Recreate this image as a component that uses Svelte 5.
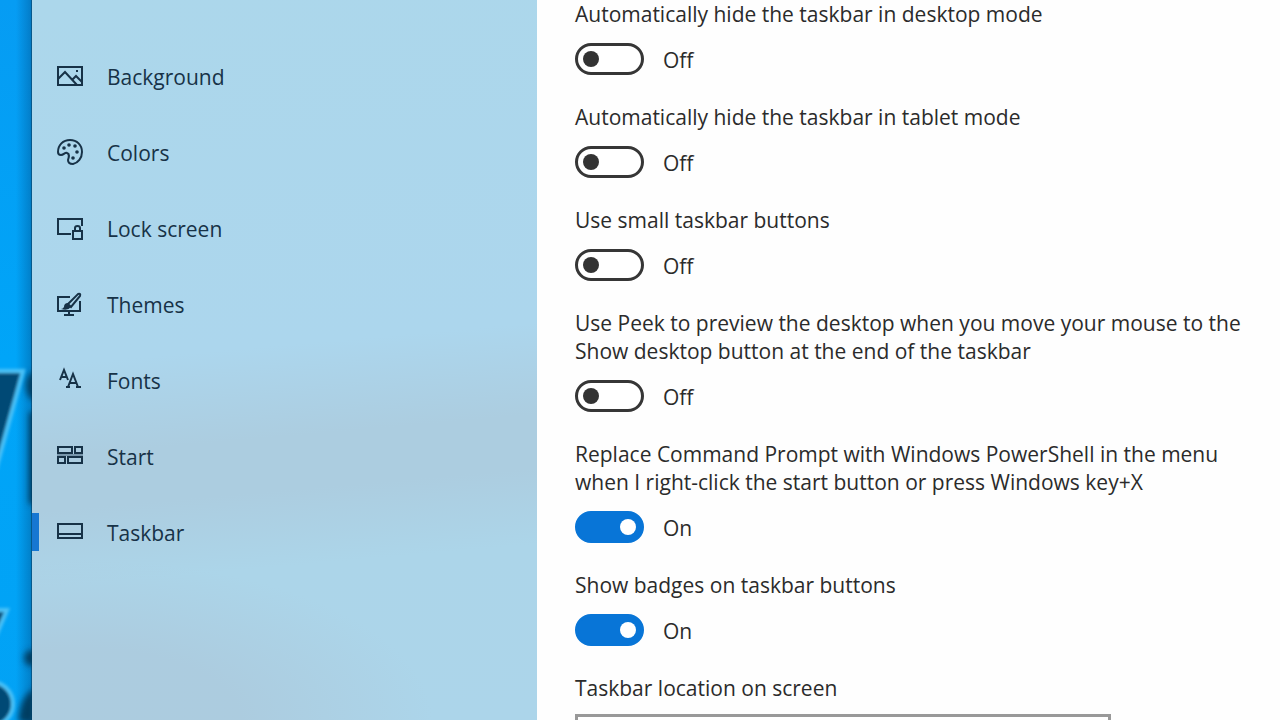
<script>
  let navItems = [
    { id: 'background', label: 'Background' },
    { id: 'colors', label: 'Colors' },
    { id: 'lock', label: 'Lock screen' },
    { id: 'themes', label: 'Themes' },
    { id: 'fonts', label: 'Fonts' },
    { id: 'start', label: 'Start' },
    { id: 'taskbar', label: 'Taskbar' }
  ];

  let current = 'taskbar';

  let settings = [
    { id: 'hide-desktop', label: 'Automatically hide the taskbar in desktop mode', on: false },
    { id: 'hide-tablet', label: 'Automatically hide the taskbar in tablet mode', on: false },
    { id: 'small-buttons', label: 'Use small taskbar buttons', on: false },
    {
      id: 'peek',
      label: 'Use Peek to preview the desktop when you move your mouse to the Show desktop button at the end of the taskbar',
      on: false
    },
    {
      id: 'powershell',
      label: 'Replace Command Prompt with Windows PowerShell in the menu when I right-click the start button or press Windows key+X',
      on: true
    },
    { id: 'badges', label: 'Show badges on taskbar buttons', on: true }
  ];

  let location = '';
</script>

<div class="screen">
  <div class="wallpaper" aria-hidden="true">
    <svg viewBox="0 0 32 720" preserveAspectRatio="xMinYMin slice">
      <defs>
        <filter id="soft" x="-100%" y="-50%" width="300%" height="200%">
          <feGaussianBlur stdDeviation="3" />
        </filter>
        <filter id="edge" x="-50%" y="-50%" width="200%" height="200%">
          <feGaussianBlur stdDeviation="1.4" />
        </filter>
      </defs>
      <g filter="url(#soft)" fill="#053c62">
        <ellipse cx="34" cy="386" rx="8" ry="14" />
        <rect x="29" y="412" width="12" height="92" />
        <circle cx="32" cy="658" r="8" />
        <path d="M18 722 Q20 694 36 688 V724 Z" />
      </g>
      <g filter="url(#edge)" fill="#054a75" stroke="#4cc2f8" stroke-width="4">
        <path d="M-26 371 H23 L-7 480 Z" />
        <path d="M-26 610 H7 L-6 640 Z" />
        <circle cx="-9" cy="704" r="22" />
      </g>
    </svg>
  </div>

  <nav class="sidebar" aria-label="Personalization">
    {#each navItems as item}
      <a
        class="nav-item"
        class:selected={current === item.id}
        href="#{item.id}"
        on:click|preventDefault={() => (current = item.id)}
      >
        <svg class="icon" viewBox="0 0 28 28" aria-hidden="true">
          {#if item.id === 'background'}
            <path d="M2 5h24v18H2z" />
            <path d="M2 17l7-7 12 13M16 18l4-4 6 6" />
            <path class="solid" d="M20 8h2v2h-2z" />
          {:else if item.id === 'colors'}
            <path d="M2 14C2 7 7 2 14 2c7 0 12 5 12 12 0 6-4 11-9 12-3 0-5-1-5-4 1-3 2-6-1-7-2-1-3 2-6 2-2 0-3-1-3-3z" />
            <circle class="solid" cx="8" cy="10" r="1.8" />
            <circle class="solid" cx="13" cy="7" r="1.8" />
            <circle class="solid" cx="19" cy="8" r="1.8" />
            <circle class="solid" cx="21" cy="14" r="1.8" />
            <circle class="solid" cx="17" cy="20" r="1.8" />
          {:else if item.id === 'lock'}
            <path d="M15 20H2V5h24v7" />
            <path d="M17 17h9v8h-9zM19 17v-3q0-2 2.500-2t2.500 2v3" />
          {:else if item.id === 'themes'}
            <path d="M14 7H2v14h22V11M13 21v3M8 25h10" />
            <path d="M12 14L22 4q3-1 2 2L15 17z" />
            <path class="solid" d="M12 13q-4 0-4 4-1 2-3 2 7 2 10-2z" />
          {:else if item.id === 'fonts'}
            <path d="M4 14L8 4l4 10M5 11h6M12 21l5-13 5 13M14 17h7M10 21h4M20 21h5" />
          {:else if item.id === 'start'}
            <path d="M2 5h14v6H2zM19 5h7v6h-7zM2 15h7v6H2zM12 15h14v6H12z" />
            <path d="M1 13h26" opacity="0.35" />
          {:else}
            <path d="M2 6h24v14H2zM2 16h24" />
          {/if}
        </svg>
        <span class="caption">{item.label}</span>
      </a>
    {/each}
  </nav>

  <main class="content">
    {#each settings as setting}
      <div class="setting">
        <label class="title" for={setting.id}>{setting.label}</label>
        <div class="toggle-row">
          <input id={setting.id} class="toggle" type="checkbox" role="switch" bind:checked={setting.on} />
          <span class="caption">{setting.on ? 'On' : 'Off'}</span>
        </div>
      </div>
    {/each}

    <div class="setting location">
      <label class="title" for="location">Taskbar location on screen</label>
      <select id="location" bind:value={location}>
        <option value=""></option>
      </select>
    </div>
  </main>
</div>

<style>
  :global(body) {
    background: #fff;
  }

  .screen {
    display: flex;
    height: 100vh;
    overflow: hidden;
    font-family: 'Open Sans', 'Noto Sans', sans-serif;
    font-size: 21px;
    line-height: 28px;
    color: #2b2b2b;
  }

  .wallpaper {
    flex: 0 0 32px;
    overflow: hidden;
    background: linear-gradient(to right, transparent 50%, rgba(0, 80, 140, 0.4) 95%, #07476f),
      linear-gradient(#069cf3, #00a5f8 50%, #02a2f5);
  }

  .wallpaper svg {
    display: block;
    width: 100%;
    height: 100%;
  }

  .sidebar {
    flex: 0 0 505px;
    display: flex;
    flex-direction: column;
    gap: 38px;
    box-sizing: border-box;
    padding-top: 57px;
    background: radial-gradient(ellipse 350px 160px at 10% 100%, rgba(172, 203, 222, 0.9) 45%, transparent),
      linear-gradient(175deg, #acd7eb 0, #acd6ed 48%, #accde0 60%, #accde0 67%, #acd5e9 77%, #acd5ea 100%);
  }

  .nav-item {
    display: flex;
    align-items: center;
    gap: 23px;
    height: 38px;
    padding-left: 17px;
    border-left: 7px solid transparent;
    color: #173247;
    text-decoration: none;
  }

  .nav-item.selected {
    border-left-color: #1677d2;
  }

  .icon {
    flex: none;
    width: 28px;
    height: 28px;
    fill: none;
    stroke: #173247;
    stroke-width: 2;
  }

  .icon .solid {
    fill: #173247;
    stroke: none;
  }

  .caption {
    padding-top: 2px;
  }

  .content {
    flex: 1;
    min-width: 0;
    padding: 0 35px 0 38px;
    background: #fefefe;
  }

  .setting {
    display: flex;
    flex-direction: column;
    gap: 15px;
    margin-bottom: 28px;
  }

  .location {
    gap: 12px;
  }

  .toggle-row {
    display: flex;
    align-items: center;
    gap: 19px;
    height: 32px;
  }

  .toggle {
    appearance: none;
    display: flex;
    align-items: center;
    box-sizing: border-box;
    width: 69px;
    height: 32px;
    margin: 0;
    padding: 0 5px;
    border: 3px solid #363636;
    border-radius: 16px;
    background: #fff;
  }

  .toggle::before {
    content: '';
    width: 16px;
    height: 16px;
    border-radius: 50%;
    background: #333;
  }

  .toggle:checked {
    justify-content: flex-end;
    border-color: #0875d7;
    background: #0875d7;
  }

  .toggle:checked::before {
    background: #fff;
  }

  select {
    appearance: none;
    width: 536px;
    max-width: 100%;
    height: 48px;
    border: 3px solid #999;
    border-radius: 0;
    background: #fff;
    font: inherit;
  }
</style>
